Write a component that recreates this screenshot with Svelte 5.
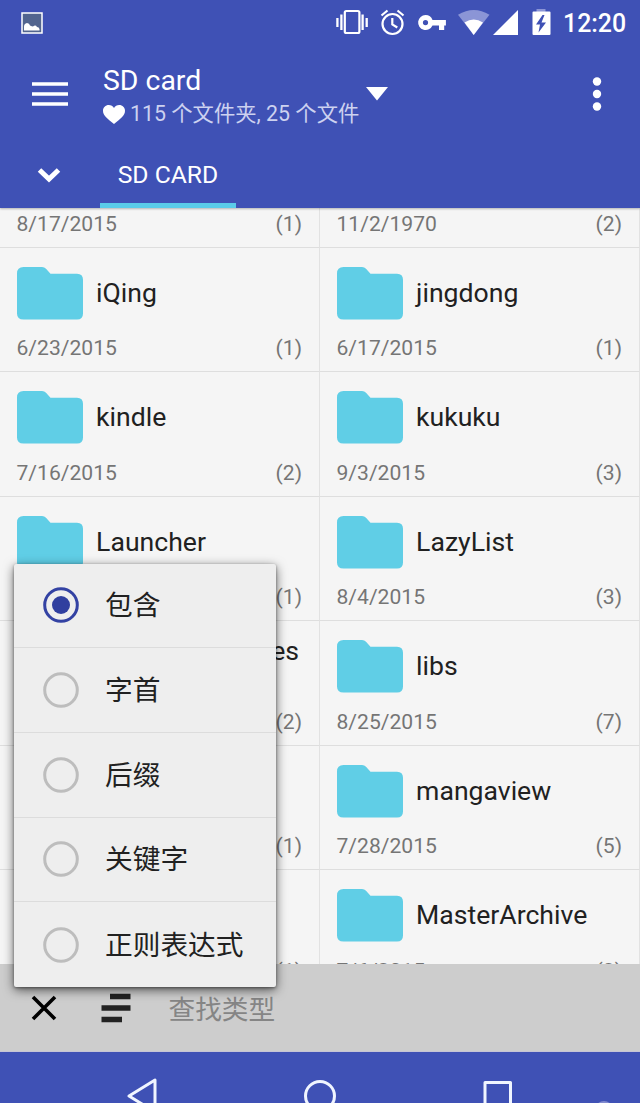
<script>
  const cells = [
    { name: '', date: '8/17/2015', count: 1 },
    { name: '', date: '11/2/1970', count: 2 },
    { name: 'iQing', date: '6/23/2015', count: 1 },
    { name: 'jingdong', date: '6/17/2015', count: 1 },
    { name: 'kindle', date: '7/16/2015', count: 2 },
    { name: 'kukuku', date: '9/3/2015', count: 3 },
    { name: 'Launcher', date: '', count: 1 },
    { name: 'LazyList', date: '8/4/2015', count: 3 },
    { name: 'es', date: '', count: 2, tail: true },
    { name: 'libs', date: '8/25/2015', count: 7 },
    { name: '', date: '', count: 1 },
    { name: 'mangaview', date: '7/28/2015', count: 5 },
    { name: '', date: '', count: 1 },
    { name: 'MasterArchive', date: '7/6/2015', count: 3 },
  ];
  const options = ['包含', '字首', '后缀', '关键字', '正则表达式'];
  let selected = $state(0);
</script>

<div class="screen">
  <header>
    <div class="status">
      <svg class="photo" width="22" height="22" viewBox="0 0 22 22">
        <rect x="1" y="1" width="20" height="20" fill="#52658f" stroke="#fff" stroke-width="1.500" />
        <path d="M3 18.500v-4q0-3 3-3.500q2.500 0 3 2.500q2 1 3 1q2.500-2 4 .5q2 0 2.500 2v1.500z" fill="#fff" />
      </svg>
      <svg class="indicators" width="220" height="30" viewBox="335 7 220 30">
        <g fill="none" stroke="#fff" stroke-width="2.200">
          <rect x="344.800" y="11" width="14.600" height="22" rx="1.500" />
          <path d="M341.400 14.500v15.500M337.400 18v9M362.600 14.500v15.500M366.700 18v9" stroke-width="2.300" />
          <circle cx="392.500" cy="24" r="10" />
          <path d="M392.300 18v6.500l5 3M381.500 15.500l6-5M403.500 15.500l-6-5" />
        </g>
        <path fill="#fff" fill-rule="evenodd" d="M425.500 15a7.500 7.500 0 1 0 7 10.500h6.500V30h5.200v-4.500h1.700V20h-13.400a7.500 7.500 0 0 0-7-5zm0 5a2.600 2.600 0 1 1 0 5.200a2.600 2.600 0 0 1 0-5.200z" />
        <path fill="#8b95d6" d="M458 14.700q15.700-9.500 31.500 0L473.700 35z" />
        <path fill="#fff" d="M464.500 22.500q9.200-6 18.500 0L473.700 35z" />
        <path fill="#fff" d="M518 10v25h-25z" />
        <path fill="#8b95d6" d="M536.500 9h9v4h-9z" />
        <path fill="#fff" fill-rule="evenodd" d="M533.500 11.500h16q1 0 1 1V34q0 1-1 1h-16q-1 0-1-1V12.500q0-1 1-1zM542.500 15l-6.500 9.500h4l-1.500 8 7.500-10h-4.500l3-7.500z" />
      </svg>
      <span class="clock">12:20</span>
    </div>

    <div class="toolbar">
      <svg class="burger" width="36" height="24" viewBox="0 0 36 24">
        <path d="M0 2h36M0 12h36M0 22h36" stroke="#fff" stroke-width="3.500" />
      </svg>
      <div class="titles">
        <div class="title">SD card</div>
        <div class="sub">
          <svg width="22" height="19" viewBox="0 0 22 19">
            <path fill="#fff" d="M11 19C4 13.500 0 10.500 0 5.800 0 2.500 2.500 0 5.800 0 8 0 10 1.200 11 3 12 1.200 14 0 16.200 0 19.500 0 22 2.500 22 5.800 22 10.500 18 13.500 11 19z" />
          </svg>
          <span>115 个文件夹, 25 个文件</span>
        </div>
      </div>
      <svg class="caret" width="22" height="14" viewBox="0 0 22 14"><path d="M0 0h22L11 13.500z" fill="#fff" /></svg>
      <svg class="more" width="10" height="34" viewBox="0 0 10 34" fill="#fff">
        <circle cx="5" cy="4.500" r="4.200" /><circle cx="5" cy="17" r="4.200" /><circle cx="5" cy="29.500" r="4.200" />
      </svg>
    </div>

    <div class="tabs">
      <svg class="chevron" width="24" height="16" viewBox="0 0 24 16">
        <path d="M2.500 3l9.500 9 9.500-9" fill="none" stroke="#fff" stroke-width="5" />
      </svg>
      <div class="tab">SD CARD</div>
    </div>
  </header>

  <main>
    <div class="grid">
      {#each cells as cell}
        <div class="cell">
          <div class="top">
            <svg width="66" height="53" viewBox="0 0 66 53">
              <path fill="#60cee6" d="M6.500 0H25q2.500 0 4 1.700L33.500 6.700H60q6 0 6 6V46.500q0 6-6 6H6.500q-6.500 0-6.500-6V6.500Q0 0 6.500 0z" />
            </svg>
            <span class="name" class:tail={cell.tail}>{cell.name}</span>
          </div>
          <div class="meta"><span>{cell.date}</span><span>({cell.count})</span></div>
        </div>
      {/each}
    </div>
  </main>

  <div class="filter">
    <svg class="close" width="26" height="26" viewBox="0 0 26 26">
      <path d="M2 2l22 22M24 2L2 24" stroke="#000" stroke-width="3.600" />
    </svg>
    <svg class="lines" width="30" height="30" viewBox="0 0 30 30">
      <path d="M9 3.500h20.500M.5 15h29M.5 26.500h20.500" stroke="#222" stroke-width="5.400" />
    </svg>
    <span>查找类型</span>
  </div>

  <nav>
    <svg width="640" height="51" viewBox="0 0 640 51" fill="none" stroke="#f0f5ff" stroke-width="3" stroke-linejoin="round">
      <path d="M155 28v32l-26-16z" />
      <circle cx="320" cy="44" r="14.500" />
      <rect x="485" y="30.500" width="25.500" height="27" />
      <circle cx="604" cy="58" r="9" fill="#828bd0" stroke="none" />
    </svg>
  </nav>

  <div class="menu">
    {#each options as option, i}
      <button onclick={() => (selected = i)}>
        <svg width="36" height="36" viewBox="0 0 36 36">
          <circle cx="18" cy="18" r="16.300" fill="none" stroke={selected === i ? '#3342a3' : '#bdbdbd'} stroke-width="3" />
          {#if selected === i}<circle cx="18" cy="18" r="9" fill="#303f9f" />{/if}
        </svg>
        <span>{option}</span>
      </button>
    {/each}
  </div>
</div>

<style>
  :global(body) { margin: 0; }
  .screen {
    position: relative;
    display: flex;
    flex-direction: column;
    width: 640px;
    height: 1103px;
    overflow: hidden;
    font-family: Roboto, "Noto Sans CJK SC", sans-serif;
    background: #f5f5f5;
  }
  svg { display: block; flex: none; }
  header { height: 208px; flex: none; background: #3f51b5; color: #fff; box-shadow: 0 1px 2px #0004; z-index: 1; }
  .status { display: flex; align-items: center; height: 45px; }
  .photo { margin-left: 21px; }
  .indicators { margin-left: 292px; margin-top: -1px; }
  .clock { margin-left: 8px; font-size: 24.900px; font-weight: 500; line-height: 30px; padding-top: 2px; }
  .toolbar { display: flex; height: 97px; align-items: center; }
  .burger { margin-left: 32px; }
  .titles { width: 255px; margin-left: 35px; padding-top: 7px; }
  .title { font-size: 28.400px; line-height: 34px; }
  .sub { display: flex; align-items: center; gap: 5px; height: 32px; font-size: 21.330px; line-height: 32px; white-space: nowrap; color: #cdd2f0; }
  .caret { margin-left: 8px; }
  .more { margin-left: 204px; }
  .tabs { display: flex; align-items: center; height: 66px; }
  .chevron { margin-left: 37px; }
  .tab { box-sizing: border-box; width: 136px; height: 66px; margin-left: 39px; border-bottom: 5px solid #5acbe9; font-size: 24.700px; line-height: 66px; text-align: center; }
  main { height: 756px; flex: none; overflow: hidden; }
  .grid { display: grid; grid-template-columns: 320px 320px; grid-auto-rows: 124.500px; margin-top: -85px; }
  .cell { box-sizing: border-box; padding: 19.400px 17px 0 16.500px; border-right: 1px solid #e2e2e2; border-bottom: 1px solid #dedede; }
  .top { display: flex; align-items: center; height: 53px; gap: 13px; padding-left: .6px; }
  .name { flex: 1; font-size: 26.600px; line-height: 32px; padding-bottom: 1px; color: #212121; }
  .name.tail { text-align: right; padding: 0 3px 32px 0; }
  .meta { display: flex; justify-content: space-between; margin-top: 14.400px; font-size: 21.100px; line-height: 28px; color: #757575; }
  .filter { display: flex; align-items: center; height: 88px; flex: none; background: #cdcdcd; border-bottom: 1px solid #c6c5d6; box-sizing: border-box; }
  .close { margin-left: 31px; }
  .lines { margin-left: 43.500px; }
  .filter span { margin-left: 38px; padding-top: 4px; font-size: 26.670px; line-height: 38px; color: #858585; }
  nav { height: 51px; background: #3f51b5; }
  .menu { position: absolute; left: 14px; top: 563.500px; width: 262px; height: 423px; background: #eee; border-radius: 2px; box-shadow: 0 3px 11px #0009, 0 1px 3px #0006; }
  button { box-sizing: border-box; display: flex; align-items: center; width: 100%; height: 84.700px; padding: 0 0 0 28.500px; border: 0; border-bottom: 1px solid #dcdcdc; background: none; font: inherit; color: #212121; }
  button:last-child { border-bottom: 0; }
  button span { margin-left: 26.500px; padding-top: 2px; font-size: 27.700px; line-height: 40px; }
</style>
